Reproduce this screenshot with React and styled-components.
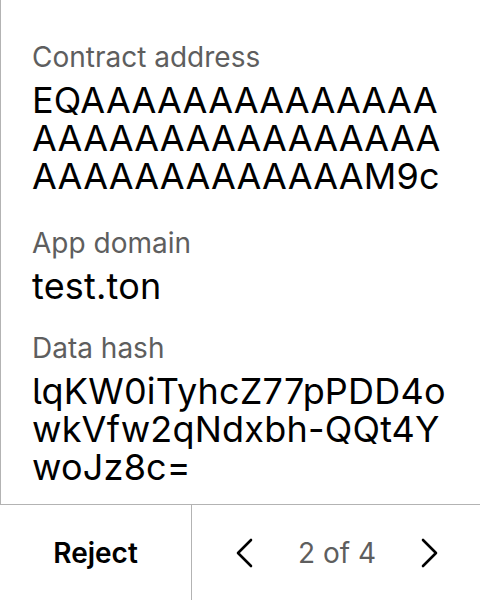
import styled, { createGlobalStyle } from "styled-components";

const GlobalStyle = createGlobalStyle`
  body {
    margin: 0;
    background: #ffffff;
    font-family: Inter, "Noto Sans", sans-serif;
    font-feature-settings: "cv05" 1;
  }
`;

const Screen = styled.div`
  display: flex;
  flex-direction: column;
  width: 480px;
  height: 600px;
  background: #ffffff;
`;

const Content = styled.div`
  flex: 1;
  display: flex;
  flex-direction: column;
  padding: 40px 20px 0 31px;
  border-left: 1px solid #b3b3b3;
  overflow: hidden;
`;

const Field = styled.div`
  display: flex;
  flex-direction: column;
  gap: 7px;
  margin-top: ${(p) => p.$space}px;
`;

const Label = styled.div`
  font-size: 28px;
  line-height: 34px;
  color: #5e5e5e;
`;

const Value = styled.div`
  font-size: 36px;
  line-height: 38px;
  letter-spacing: 0.2px;
  color: #000000;
`;

const ValueLine = styled.span`
  display: block;
  white-space: nowrap;
`;

const Footer = styled.div`
  display: grid;
  grid-template-columns: 192px 1fr;
  height: 96px;
  border-top: 1px solid #b3b3b3;
  box-sizing: border-box;
`;

const RejectButton = styled.button`
  display: flex;
  align-items: center;
  justify-content: center;
  border: none;
  border-right: 1px solid #b3b3b3;
  background: transparent;
  font-family: inherit;
  font-size: 28px;
  font-weight: 600;
  color: #000000;
  padding: 0;
`;

const Pager = styled.div`
  display: flex;
  align-items: center;
  justify-content: space-between;
  padding: 0 40px 0 42px;
`;

const ArrowButton = styled.button`
  display: flex;
  align-items: center;
  justify-content: center;
  width: 20px;
  height: 40px;
  border: none;
  background: transparent;
  padding: 0;
`;

const PageText = styled.span`
  font-size: 28px;
  color: #5e5e5e;
`;

function Chevron({ dir }) {
  const d = dir === "left" ? "M15 2 L2 15 L15 28" : "M2 2 L15 15 L2 28";
  return (
    <svg width="17" height="30" viewBox="0 0 17 30" fill="none">
      <path d={d} stroke="#000" strokeWidth="2.6" strokeLinecap="round" strokeLinejoin="round" />
    </svg>
  );
}

const fields = [
  {
    label: "Contract address",
    space: 0,
    lines: ["EQAAAAAAAAAAAAAA", "AAAAAAAAAAAAAAAA", "AAAAAAAAAAAAAM9c"],
  },
  { label: "App domain", space: 31, lines: ["test.ton"] },
  {
    label: "Data hash",
    space: 26,
    lines: ["lqKW0iTyhcZ77pPDD4o", "wkVfw2qNdxbh-QQt4Y", "woJz8c="],
  },
];

export default function App() {
  return (
    <>
      <GlobalStyle />
      <Screen>
        <Content>
          {fields.map((f) => (
            <Field key={f.label} $space={f.space}>
              <Label>{f.label}</Label>
              <Value>
                {f.lines.map((line) => (
                  <ValueLine key={line}>{line}</ValueLine>
                ))}
              </Value>
            </Field>
          ))}
        </Content>
        <Footer>
          <RejectButton>Reject</RejectButton>
          <Pager>
            <ArrowButton aria-label="Previous">
              <Chevron dir="left" />
            </ArrowButton>
            <PageText>2 of 4</PageText>
            <ArrowButton aria-label="Next">
              <Chevron dir="right" />
            </ArrowButton>
          </Pager>
        </Footer>
      </Screen>
    </>
  );
}
